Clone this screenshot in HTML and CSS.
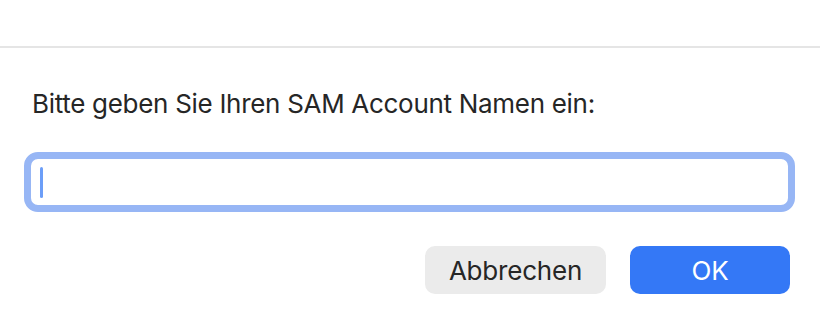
FILE: index.html
```html
<!DOCTYPE html>
<html lang="de">
<head>
<meta charset="utf-8">
<title>SAM Account</title>
<link rel="stylesheet" href="styles.css">
</head>
<body>
<div class="dialog">
  <div class="topbar"></div>
  <div class="content">
    <p class="prompt">Bitte geben Sie Ihren SAM Account Namen ein:</p>
    <div class="field"><span class="caret"></span></div>
    <div class="actions">
      <button class="btn btn-secondary">Abbrechen</button>
      <button class="btn btn-primary">OK</button>
    </div>
  </div>
</div>
</body>
</html>
```
FILE: styles.css
```css
html, body {
  margin: 0;
  padding: 0;
  background: #ffffff;
}
body {
  font-family: Inter, "Liberation Sans", sans-serif;
  color: #262626;
  width: 820px;
  height: 326px;
  overflow: hidden;
}
.topbar {
  height: 46px;
  border-bottom: 2px solid #e5e5e5;
}
.content {
  display: flex;
  flex-direction: column;
}
.prompt {
  margin: 40px 0 0 32px;
  font-size: 26px;
  line-height: 32px;
  letter-spacing: -0.3px;
}
.field {
  margin: 32px 25px 0 24px;
  height: 60px;
  box-sizing: border-box;
  border: 7px solid #97b6f5;
  border-radius: 14px;
  padding: 8px 0 0 9px;
}
.caret {
  display: block;
  width: 3px;
  height: 31px;
  background: #6c9ef8;
  border-radius: 2px;
}
.actions {
  display: flex;
  justify-content: flex-end;
  gap: 24px;
  margin-top: 34px;
  padding-right: 30px;
}
.btn {
  height: 48px;
  border: none;
  border-radius: 10px;
  font-family: Inter, "Liberation Sans", sans-serif;
  font-size: 26px;
  letter-spacing: -0.2px;
  padding: 0;
}
.btn-secondary {
  width: 181px;
  background: #ebebeb;
  color: #262626;
}
.btn-primary {
  width: 160px;
  background: #3478f6;
  color: #ffffff;
}
```
